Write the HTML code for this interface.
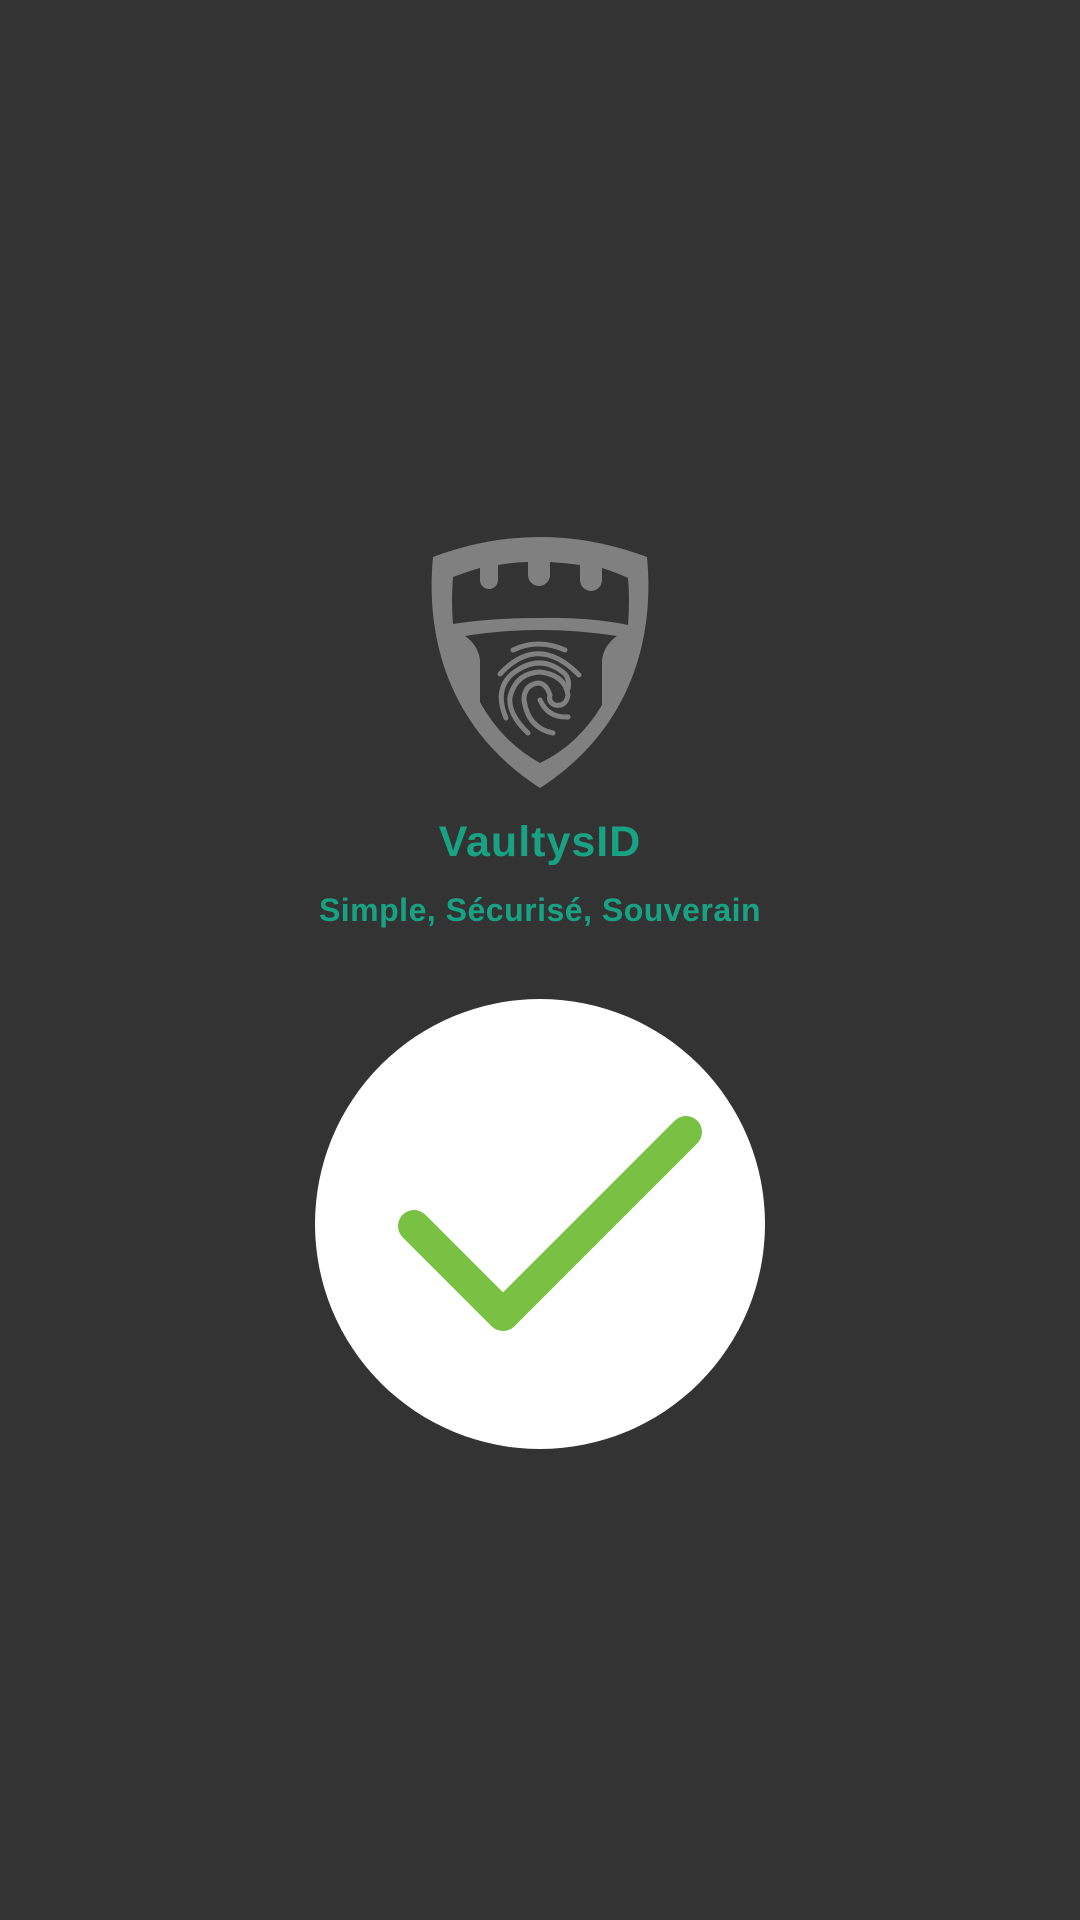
<!DOCTYPE html>
<html><head><meta charset="utf-8"><style>
html,body{margin:0;padding:0;background:#333333;width:1080px;height:1920px;overflow:hidden}
.t{position:absolute;left:0;width:1080px;text-align:center;color:#17a383;font-family:"Liberation Sans",sans-serif;font-weight:bold}
</style></head><body>
<svg width="1080" height="1920" style="position:absolute;left:0;top:0">
<path d="M433,557 Q540,517 647,557 C655,640 630,730 540,788 C450,730 425,640 433,557 Z" fill="#808080"/>
<path d="M453,577 Q475,569 480,568 L480,580 a9,9 0 0 0 18,0 L498,565 Q515,562 528,562 L528,575 a11,11 0 0 0 22,0 L550,562 Q565,563 580,565 L580,580 a11,11 0 0 0 22,0 L602,568 Q615,572 628,578 Q630,600 628,625 Q590,617 540,618 Q490,618 453,624 Q451,600 453,577 Z" fill="#333333"/>
<path d="M465,636 Q540,624 617,636 Q604,645 602,660 L602,705 Q578,745 540,763 Q502,742 480,702 L480,660 Q478,645 465,636 Z" fill="#333333"/>
<g fill="none" stroke="#808080" stroke-width="5" stroke-linecap="round">
<path d="M513,650 Q538,638 565,650"/>
<path d="M500,674 Q538,633 579,675"/>
<path d="M506,718 Q494,690 512,674 Q540,652 565,674 Q570,680 568,689"/>
<path d="M528,733 Q508,714 510,697 Q516,673 540,672 Q565,675 568,695 Q566,707 555,705 Q548,702 550,695 Q546,683 538,683 Q524,685 524,700 Q528,728 553,733"/>
<path d="M540,700 Q548,718 568,717"/>
</g>
<circle cx="540" cy="1224" r="225" fill="#ffffff"/>
<path d="M414,1226 L503,1315 L686,1132" fill="none" stroke="#79c142" stroke-width="32" stroke-linecap="round" stroke-linejoin="round"/>
</svg>
<div class="t" style="top:818px;font-size:43px;letter-spacing:1px">VaultysID</div>
<div class="t" style="top:892px;font-size:32px;letter-spacing:0.5px">Simple, Sécurisé, Souverain</div>
</body></html>
